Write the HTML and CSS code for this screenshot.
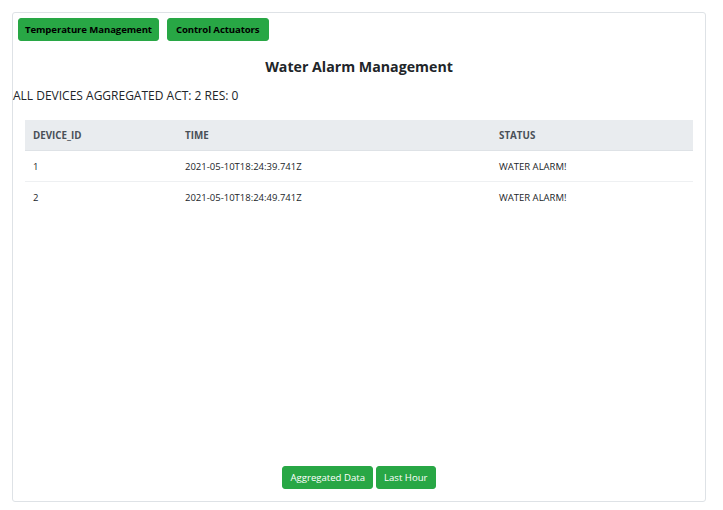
FILE: index.html
```html
<!DOCTYPE html>
<html lang="en">
<head>
<meta charset="utf-8">
<title>Water Alarm Management</title>
<link rel="stylesheet" href="styles.css">
</head>
<body>
<div class="page">
  <div class="card">
    <div class="nav">
      <button class="btn btn-bold">Temperature Management</button>
      <button class="btn btn-bold">Control Actuators</button>
    </div>
    <h1 class="title">Water Alarm Management</h1>
    <p class="summary">ALL DEVICES AGGREGATED ACT: 2 RES: 0</p>
    <div class="table-wrap">
      <table class="data">
        <thead>
          <tr><th class="c1">DEVICE_ID</th><th class="c2">TIME</th><th class="c3">STATUS</th></tr>
        </thead>
        <tbody>
          <tr><td>1</td><td>2021-05-10T18:24:39.741Z</td><td>WATER ALARM!</td></tr>
          <tr><td>2</td><td>2021-05-10T18:24:49.741Z</td><td>WATER ALARM!</td></tr>
        </tbody>
      </table>
    </div>
    <div class="footer">
      <button class="btn">Aggregated Data</button>
      <button class="btn">Last Hour</button>
    </div>
  </div>
</div>
</body>
</html>
```

FILE: styles.css
```css
html, body {
  margin: 0;
  padding: 0;
  background: #ffffff;
}
body {
  font-family: "Open Sans", "Noto Sans", sans-serif;
  color: #212529;
}
.page {
  padding: 12px 17px 8px 12px;
}
.card {
  height: 488px;
  border: 1px solid #dee2e6;
  border-radius: 3px;
  display: flex;
  flex-direction: column;
}
.nav {
  display: flex;
  gap: 8px;
  padding: 5px 0 0 5px;
}
.btn {
  font-family: "Open Sans", "Noto Sans", sans-serif;
  background: #28a745;
  color: #ffffff;
  border: 1px solid #28a745;
  border-radius: 3px;
  font-size: 9.6px;
  height: 23px;
  padding: 0 7px;
  line-height: 21px;
  cursor: pointer;
}
.btn-bold {
  color: #000000;
  font-weight: 700;
  font-size: 9.6px;
  letter-spacing: -0.1px;
  padding: 0 6px;
}
.btn-bold + .btn-bold {
  padding: 0 8px;
}
.title {
  margin: 16px 0 0 0;
  text-align: center;
  font-size: 14.2px;
  font-weight: 700;
  line-height: 20px;
  color: #212529;
}
.summary {
  margin: 10px 0 0 0;
  font-size: 12px;
  line-height: 18px;
}
.table-wrap {
  padding: 15px 12px 0 12px;
}
.data {
  width: 100%;
  border-collapse: collapse;
  font-size: 9.5px;
}
.data th {
  background: #e9ecef;
  color: #495057;
  font-weight: 700;
  font-size: 9.8px;
  text-align: left;
  height: 30px;
  padding: 0 8px;
  border-bottom: 1px solid #dee2e6;
}
.data td {
  height: 30px;
  padding: 0 8px;
  border-top: 1px solid #eef0f2;
  color: #212529;
}
.data tbody tr:first-child td {
  border-top: none;
}
.c1 { width: 136px; }
.c2 { width: 298px; }
.footer {
  margin-top: auto;
  display: flex;
  justify-content: center;
  gap: 3px;
  padding-bottom: 12px;
}
```
